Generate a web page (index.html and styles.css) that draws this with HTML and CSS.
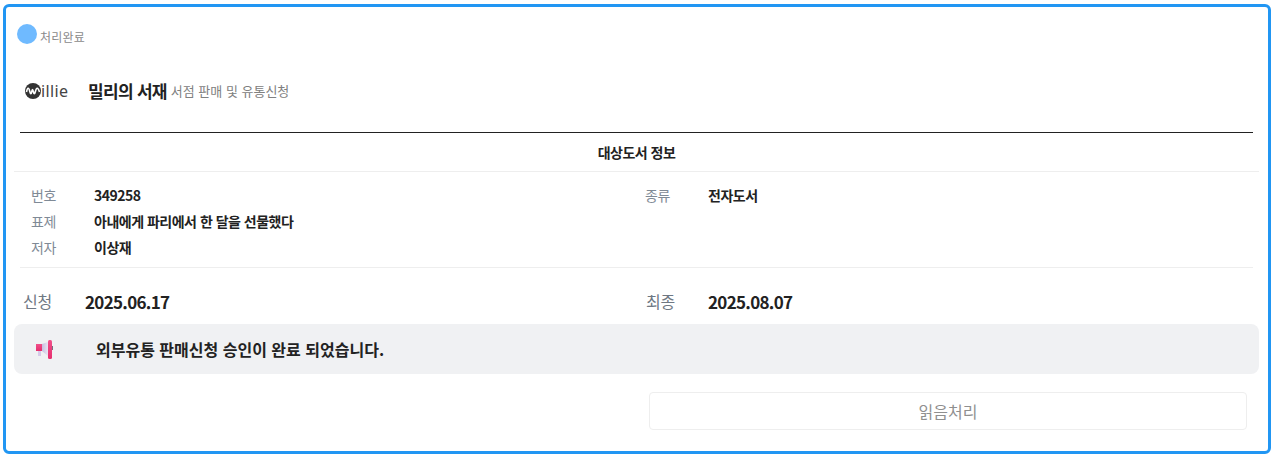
FILE: index.html
```html
<!DOCTYPE html>
<html lang="ko">
<head>
<meta charset="utf-8">
<title>처리완료</title>
<link rel="stylesheet" href="styles.css">
</head>
<body>
<main class="card">
  <div class="status"><span class="dot"></span><span class="status-text">처리완료</span></div>
  <header class="brand">
    <div class="logo">
      <svg class="logo-mark" width="16" height="16" viewBox="0 0 16 16"><circle cx="8" cy="8" r="8" fill="#333"/><path d="M1.500 9C2.500 4 3.800 4 4.800 8.500c.6 2.800 1.500 2.800 2 0 .4-2.500 1-2.500 1.500 0 .6 2.800 1.500 2.800 2.100 0C11.400 4 13 4 14.500 9" fill="none" stroke="#fff" stroke-width="1.600"/></svg><span class="logo-text">illie</span>
    </div>
    <h1 class="title">밀리의 서재</h1>
    <span class="subtitle">서점 판매 및 유통신청</span>
  </header>
  <h2 class="section-title">대상도서 정보</h2>
  <section class="info">
    <div class="info-col">
      <div class="info-row"><span class="info-label">번호</span><span class="info-value">349258</span></div>
      <div class="info-row"><span class="info-label">표제</span><span class="info-value">아내에게 파리에서 한 달을 선물했다</span></div>
      <div class="info-row"><span class="info-label">저자</span><span class="info-value">이상재</span></div>
    </div>
    <div class="info-col">
      <div class="info-row"><span class="info-label">종류</span><span class="info-value">전자도서</span></div>
    </div>
  </section>
  <section class="dates">
    <div class="date-item"><span class="date-label">신청</span><span class="date-value">2025.06.17</span></div>
    <div class="date-item date-right"><span class="date-label">최종</span><span class="date-value">2025.08.07</span></div>
  </section>
  <div class="notice">
    <svg class="notice-icon" width="18" height="20" viewBox="0 0 18 20">
      <defs>
        <linearGradient id="pink" x1="0" y1="0" x2="0" y2="1"><stop offset="0" stop-color="#f0508a"/><stop offset="1" stop-color="#e62e6e"/></linearGradient>
        <linearGradient id="cone" x1="0" y1="0" x2="1" y2="0"><stop offset="0" stop-color="#c9bfe0"/><stop offset="1" stop-color="#e9e4f2"/></linearGradient>
      </defs>
      <rect x="3" y="12" width="3" height="5" fill="#d6cbe8"/>
      <path d="M7 5L13 3V17L7 12Z" fill="url(#cone)"/>
      <rect x="1" y="5" width="6" height="7" fill="url(#pink)"/>
      <rect x="13" y="1" width="4" height="19" rx="1.500" fill="url(#pink)"/>
      <rect x="17" y="7" width="1" height="4" fill="#77707f"/>
    </svg>
    <p class="notice-text">외부유통 판매신청 승인이 완료 되었습니다.</p>
  </div>
  <div class="actions"><button class="read-btn" type="button">읽음처리</button></div>
</main>
</body>
</html>
```
FILE: styles.css
```css
* { box-sizing: border-box; }
html, body { margin: 0; padding: 0; background: #fff; }
body { font-family: "Noto Sans CJK KR", "Noto Sans", sans-serif; color: #222; }
.card {
  width: 1268px;
  height: 450px;
  margin: 4px 3px 0;
  border: 3px solid #2196f3;
  border-radius: 6px;
  padding: 17px 9px 0 8px;
  background: #fff;
}
.status { display: flex; align-items: flex-start; height: 20px; padding-left: 3px; }
.dot { width: 20px; height: 20px; border-radius: 50%; background: #6fbaff; flex: none; }
.status-text { margin: 4px 0 0 3px; font-size: 12px; line-height: 18px; color: #8a8a8a; letter-spacing: .2px; }
.brand { display: flex; align-items: center; height: 34px; margin-top: 30px; padding-left: 11px; }
.logo { display: flex; align-items: center; width: 63px; height: 20px; }
.logo-text { font-family: "Noto Sans", sans-serif; font-size: 16px; line-height: 20px; color: #444; letter-spacing: .4px; }
.title { margin: 0; font-size: 17px; font-weight: 700; line-height: 24px; color: #222; letter-spacing: -.7px; }
.subtitle { margin-left: 4px; font-size: 13px; line-height: 24px; color: #808080; }
.section-title {
  margin: 24px 6px 0;
  height: 39px;
  border-top: 1px solid #222;
  font-size: 14px;
  font-weight: 700;
  line-height: 38px;
  text-align: center;
  color: #222;
  letter-spacing: -.5px;
}
.info {
  display: grid;
  grid-template-columns: 614px 1fr;
  border-top: 1px solid #eee;
  padding: 10px 0 8px 17px;
  height: 96px;
}
.info-row { display: flex; height: 26px; align-items: center; letter-spacing: -.5px; }
.info-label { width: 63px; font-size: 14px; color: #7f8a96; flex: none; }
.info-value { font-size: 14px; font-weight: 700; color: #222; }
.dates {
  display: grid;
  grid-template-columns: 623px 1fr;
  margin: 0 6px;
  border-top: 1px solid #eee;
  padding: 21px 0 0 3px;
  height: 57px;
}
.date-item { display: flex; align-items: center; height: 24px; }
.date-label { width: 62px; font-size: 16px; color: #6f7883; flex: none; letter-spacing: -.3px; }
.date-value { font-size: 17px; font-weight: 600; color: #222; letter-spacing: -.7px; }
.notice {
  display: flex;
  align-items: center;
  height: 50px;
  border-radius: 8px;
  background: #f0f1f3;
  padding-left: 21px;
}
.notice-icon { flex: none; }
.notice-text { margin: 0 0 0 43px; font-size: 16px; font-weight: 600; color: #222; }
.actions { display: flex; justify-content: flex-end; margin-top: 18px; padding-right: 12px; }
.read-btn {
  width: 598px;
  height: 38px;
  border: 1px solid #eee;
  border-radius: 4px;
  background: #fff;
  font-family: inherit;
  font-size: 16px;
  color: #8f8f8f;
}
```
